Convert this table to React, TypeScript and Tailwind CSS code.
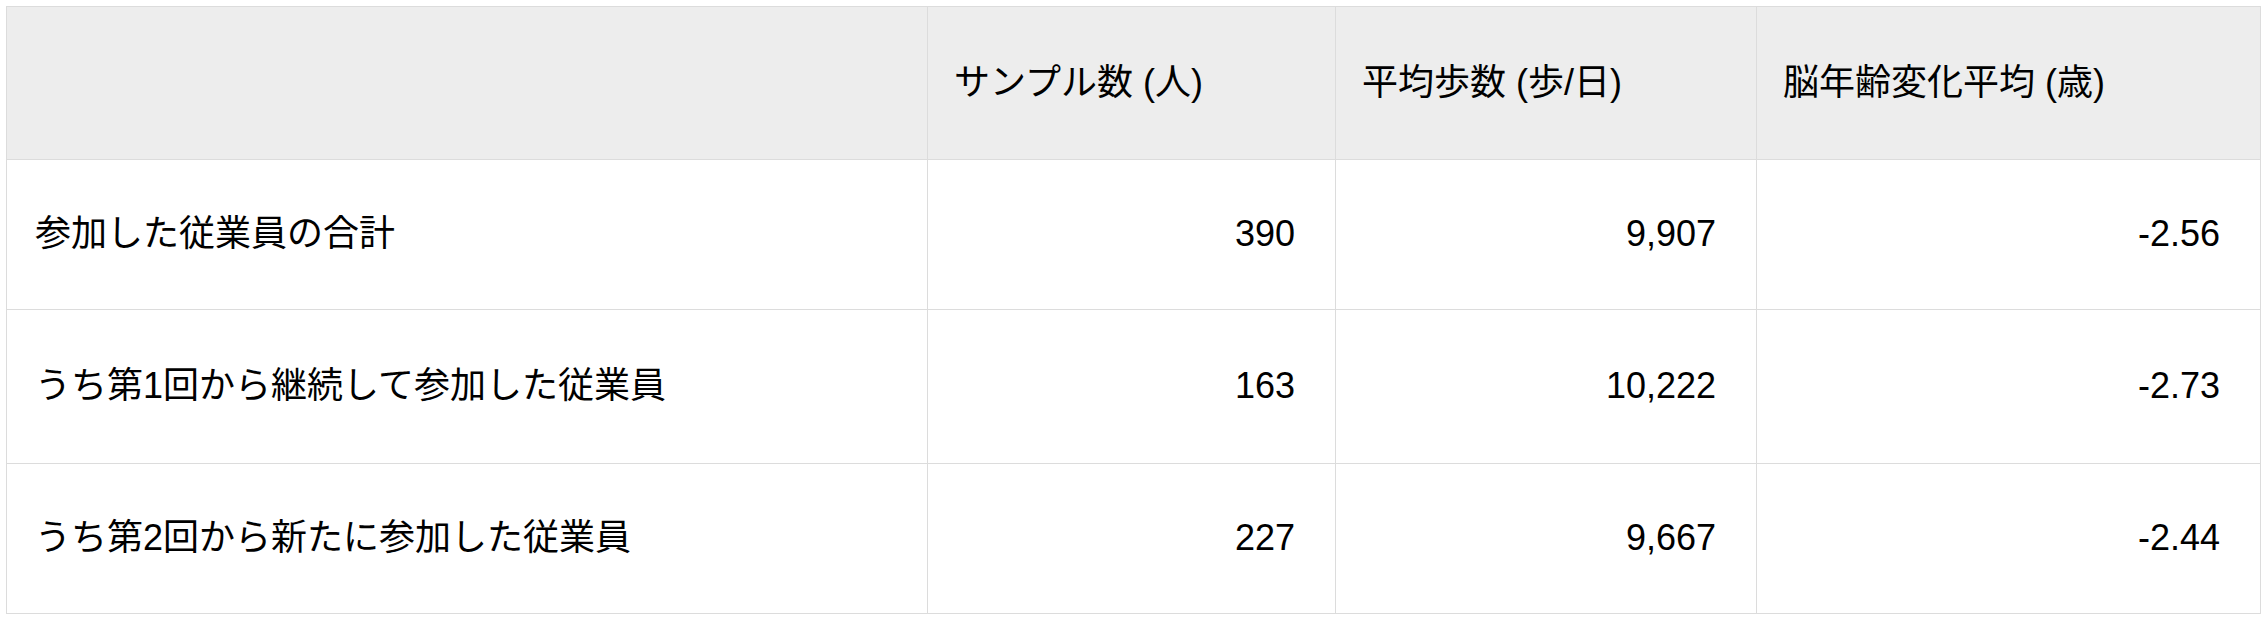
import React from "react";

const rows = [
  { label: "参加した従業員の合計", n: "390", steps: "9,907", age: "-2.56", h: "h-[150px]" },
  { label: "うち第1回から継続して参加した従業員", n: "163", steps: "10,222", age: "-2.73", h: "h-[154px]" },
  { label: "うち第2回から新たに参加した従業員", n: "227", steps: "9,667", age: "-2.44", h: "h-[150px]" },
];

export default function App() {
  return (
    <div
      className="bg-white pt-[6px] pl-[6px] w-[2264px] h-[622px] text-black"
      style={{ fontFamily: '"Liberation Sans", "Noto Sans CJK JP", Arial, sans-serif' }}
    >
      <table className="border-collapse w-[2254px] table-fixed text-[36px] leading-[1.3]">
        <colgroup>
          <col className="w-[921px]" />
          <col className="w-[408px]" />
          <col className="w-[421px]" />
          <col className="w-[504px]" />
        </colgroup>
        <thead>
          <tr className="h-[153px] bg-[#ededed]">
            <th className="border border-[#dcdcdc] font-normal text-left pl-[28px] pr-[40px]"></th>
            <th className="border border-[#dcdcdc] font-normal text-left pl-[26px] pr-[40px]">サンプル数 (人)</th>
            <th className="border border-[#dcdcdc] font-normal text-left pl-[26px] pr-[40px]">平均歩数 (歩/日)</th>
            <th className="border border-[#dcdcdc] font-normal text-left pl-[26px] pr-[40px]">脳年齢変化平均 (歳)</th>
          </tr>
        </thead>
        <tbody>
          {rows.map((r) => (
            <tr key={r.label} className={r.h}>
              <td className="border border-[#dcdcdc] text-left pl-[28px] pr-[40px]">{r.label}</td>
              <td className="border border-[#dcdcdc] text-right pl-[26px] pr-[40px]">{r.n}</td>
              <td className="border border-[#dcdcdc] text-right pl-[26px] pr-[40px]">{r.steps}</td>
              <td className="border border-[#dcdcdc] text-right pl-[26px] pr-[40px]">{r.age}</td>
            </tr>
          ))}
        </tbody>
      </table>
    </div>
  );
}
